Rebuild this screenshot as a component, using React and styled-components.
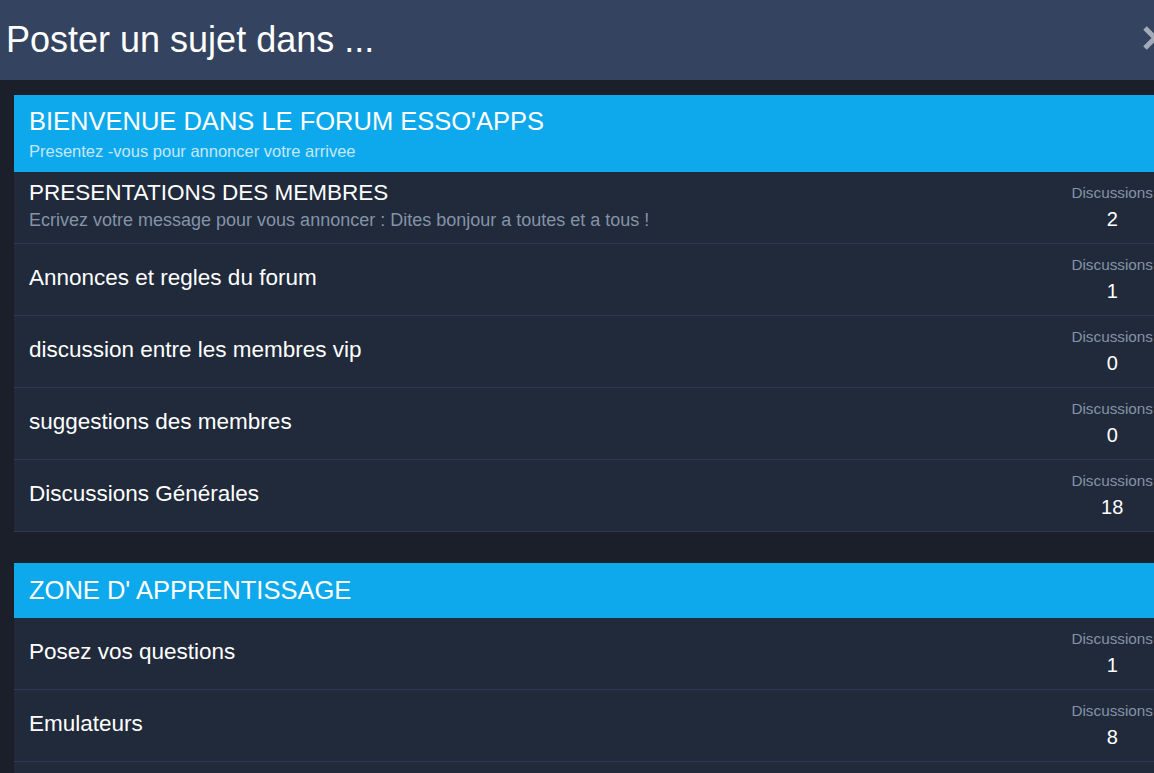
import React from "react";
import styled, { createGlobalStyle } from "styled-components";

const GlobalStyle = createGlobalStyle`
  html, body {
    margin: 0;
    padding: 0;
    background: #1a1f2a;
    overflow: hidden;
  }
  body {
    font-family: "Liberation Sans", Arial, sans-serif;
  }
`;

const sections = [
  {
    title: "BIENVENUE DANS LE FORUM ESSO'APPS",
    subtitle: "Presentez -vous pour annoncer votre arrivee",
    forums: [
      {
        name: "PRESENTATIONS DES MEMBRES",
        desc: "Ecrivez votre message pour vous annoncer : Dites bonjour a toutes et a tous !",
        count: 2,
      },
      { name: "Annonces et regles du forum", count: 1 },
      { name: "discussion entre les membres vip", count: 0 },
      { name: "suggestions des membres", count: 0 },
      { name: "Discussions Générales", count: 18 },
    ],
  },
  {
    title: "ZONE D' APPRENTISSAGE",
    forums: [
      { name: "Posez vos questions", count: 1 },
      { name: "Emulateurs", count: 8 },
      { name: "Tutoriels", count: 3 },
    ],
  },
];

const App = () => {
  return (
    <>
      <GlobalStyle />
      <Page>
        <Header>
          <HeaderTitle>Poster un sujet dans ...</HeaderTitle>
          <CloseButton aria-label="Fermer">
            <svg width="26" height="26" viewBox="0 0 26 26">
              <path
                d="M3 2 L23 22 M23 2 L3 22"
                stroke="#a3abb8"
                strokeWidth="5"
                fill="none"
              />
            </svg>
          </CloseButton>
        </Header>
        <Body>
          {sections.map((s) => (
            <Section key={s.title}>
              <SectionHead $withSub={!!s.subtitle}>
                <SectionTitle>{s.title}</SectionTitle>
                {s.subtitle && <SectionSub>{s.subtitle}</SectionSub>}
              </SectionHead>
              {s.forums.map((f) => (
                <Row key={f.name}>
                  <Main>
                    <ForumName>{f.name}</ForumName>
                    {f.desc && <ForumDesc>{f.desc}</ForumDesc>}
                  </Main>
                  <Stat>
                    <StatLabel>Discussions</StatLabel>
                    <StatValue>{f.count}</StatValue>
                  </Stat>
                </Row>
              ))}
            </Section>
          ))}
        </Body>
      </Page>
    </>
  );
};

const Page = styled.div`
  width: 1181px;
  min-height: 773px;
  background: #1a1f2a;
`;

const Header = styled.div`
  height: 80px;
  background: #344360;
  display: flex;
  align-items: center;
  justify-content: space-between;
  padding: 0 13px 0 6px;
`;

const HeaderTitle = styled.h1`
  margin: 0;
  font-size: 36px;
  font-weight: normal;
  color: #ffffff;
  line-height: 40px;
`;

const CloseButton = styled.div`
  width: 26px;
  height: 26px;
  margin-top: -2px;
  display: flex;
`;

const Body = styled.div`
  padding: 15px 14px 0 14px;
  display: flex;
  flex-direction: column;
  gap: 31px;
`;

const Section = styled.div`
  display: flex;
  flex-direction: column;
`;

const SectionHead = styled.div`
  background: #0ea9ec;
  padding: ${(p) => (p.$withSub ? "11px 15px 12px" : "12px 15px 13px")};
`;

const SectionTitle = styled.div`
  font-size: 25.5px;
  line-height: 30px;
  color: #ffffff;
`;

const SectionSub = styled.div`
  margin-top: 6px;
  font-size: 16.5px;
  line-height: 18px;
  color: #c4e7f9;
`;

const Row = styled.div`
  min-height: 71px;
  background: #202a3a;
  border-bottom: 1px solid #2d3a50;
  display: flex;
  align-items: center;
  justify-content: space-between;
  padding: 0 14px 0 15px;
`;

const Main = styled.div`
  display: flex;
  flex-direction: column;
  padding-bottom: 4px;
`;

const ForumName = styled.div`
  font-size: 22.5px;
  line-height: 26px;
  color: #ffffff;
`;

const ForumDesc = styled.div`
  font-size: 18px;
  line-height: 22px;
  margin-top: 3px;
  color: #8593a8;
`;

const Stat = styled.div`
  display: flex;
  flex-direction: column;
  align-items: center;
  gap: 5px;
`;

const StatLabel = styled.div`
  font-size: 15.3px;
  line-height: 18px;
  color: #8593a8;
`;

const StatValue = styled.div`
  font-size: 20px;
  line-height: 24px;
  color: #ffffff;
`;

export default App;
